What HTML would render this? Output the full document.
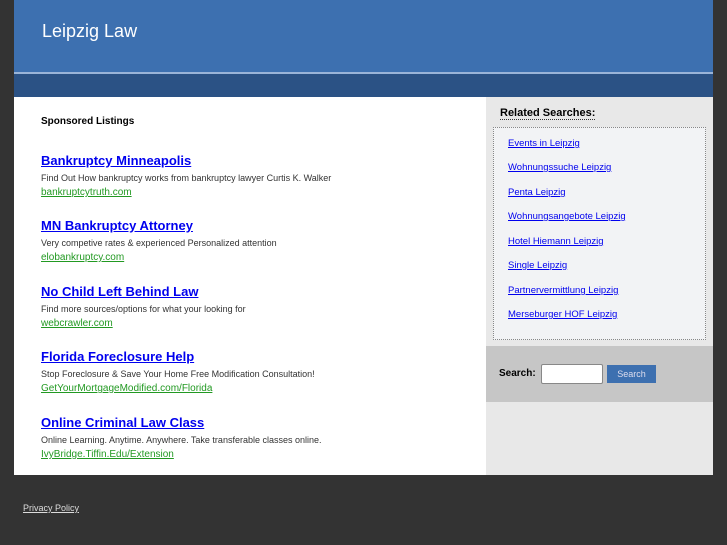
<!DOCTYPE html>
<html><head><style>
body{margin:0;background:#333;font-family:"Liberation Sans",sans-serif;width:727px;height:545px;overflow:hidden;position:relative}
.hd{position:absolute;left:14px;top:0;width:699px;height:72px;background:#3d70b0}
.hd h1{position:absolute;left:28px;top:21px;margin:0;font-size:18px;font-weight:normal;color:#fff}
.ln{position:absolute;left:14px;top:72px;width:699px;height:2px;background:#9ab4d8}
.bd{position:absolute;left:14px;top:74px;width:699px;height:23px;background:#2b5285}
.main{position:absolute;left:14px;top:97px;width:472px;height:378px;background:#fff}
.side{position:absolute;left:486px;top:97px;width:227px;height:378px;background:#e8e8e8}
.sp{position:absolute;left:27px;top:19px;font-size:10px;font-weight:bold;color:#000}
.ad{position:absolute;left:27px}
.ad a.t{font-size:13px;font-weight:bold;color:#0000ee;text-decoration:underline;display:block}
.ad .d{font-size:9px;color:#333;margin-top:5px}
.ad a.u{font-size:10px;color:#229922;text-decoration:underline;display:block;margin-top:4px}
.rs{position:absolute;left:14px;top:10px;font-size:11px;font-weight:bold;border-bottom:1px dotted #333}
.box{position:absolute;left:7px;top:30px;width:211px;height:211px;border:1px dotted #888;background:#f2f3f5}
.box a{position:absolute;left:14px;font-size:9.5px;color:#0000ee;text-decoration:underline}
.srch{position:absolute;left:0;top:249px;width:227px;height:56px;background:#c6c6c6}
.srch b{position:absolute;left:13px;top:22px;font-size:10px}
.srch .in{position:absolute;left:55px;top:18px;width:60px;height:18px;background:#fff;border:1px solid #888;border-radius:2px}
.srch .bt{position:absolute;left:121px;top:19px;width:49px;height:18px;background:#3d70b0;color:#dde;font-size:9px;text-align:center;line-height:18px}
.pp{position:absolute;left:23px;top:503px;font-size:9px;color:#ddd;text-decoration:underline}
</style></head><body>
<div class="hd"><h1>Leipzig Law</h1></div><div class="ln"></div><div class="bd"></div>
<div class="main">
<div class="sp">Sponsored Listings</div>
<div class="ad" style="top:56px"><a class="t">Bankruptcy Minneapolis</a><div class="d">Find Out How bankruptcy works from bankruptcy lawyer Curtis K. Walker</div><a class="u">bankruptcytruth.com</a></div>
<div class="ad" style="top:121px"><a class="t">MN Bankruptcy Attorney</a><div class="d">Very competive rates &amp; experienced Personalized attention</div><a class="u">elobankruptcy.com</a></div>
<div class="ad" style="top:187px"><a class="t">No Child Left Behind Law</a><div class="d">Find more sources/options for what your looking for</div><a class="u">webcrawler.com</a></div>
<div class="ad" style="top:252px"><a class="t">Florida Foreclosure Help</a><div class="d">Stop Foreclosure &amp; Save Your Home Free Modification Consultation!</div><a class="u">GetYourMortgageModified.com/Florida</a></div>
<div class="ad" style="top:318px"><a class="t">Online Criminal Law Class</a><div class="d">Online Learning. Anytime. Anywhere. Take transferable classes online.</div><a class="u">IvyBridge.Tiffin.Edu/Extension</a></div>
</div>
<div class="side">
<div class="rs">Related Searches:</div>
<div class="box">
<a style="top:10px">Events in Leipzig</a>
<a style="top:34px">Wohnungssuche Leipzig</a>
<a style="top:59px">Penta Leipzig</a>
<a style="top:83px">Wohnungsangebote Leipzig</a>
<a style="top:108px">Hotel Hiemann Leipzig</a>
<a style="top:132px">Single Leipzig</a>
<a style="top:157px">Partnervermittlung Leipzig</a>
<a style="top:181px">Merseburger HOF Leipzig</a>
</div>
<div class="srch"><b>Search:</b><div class="in"></div><div class="bt">Search</div></div>
</div>
<div class="pp">Privacy Policy</div>
</body></html>
